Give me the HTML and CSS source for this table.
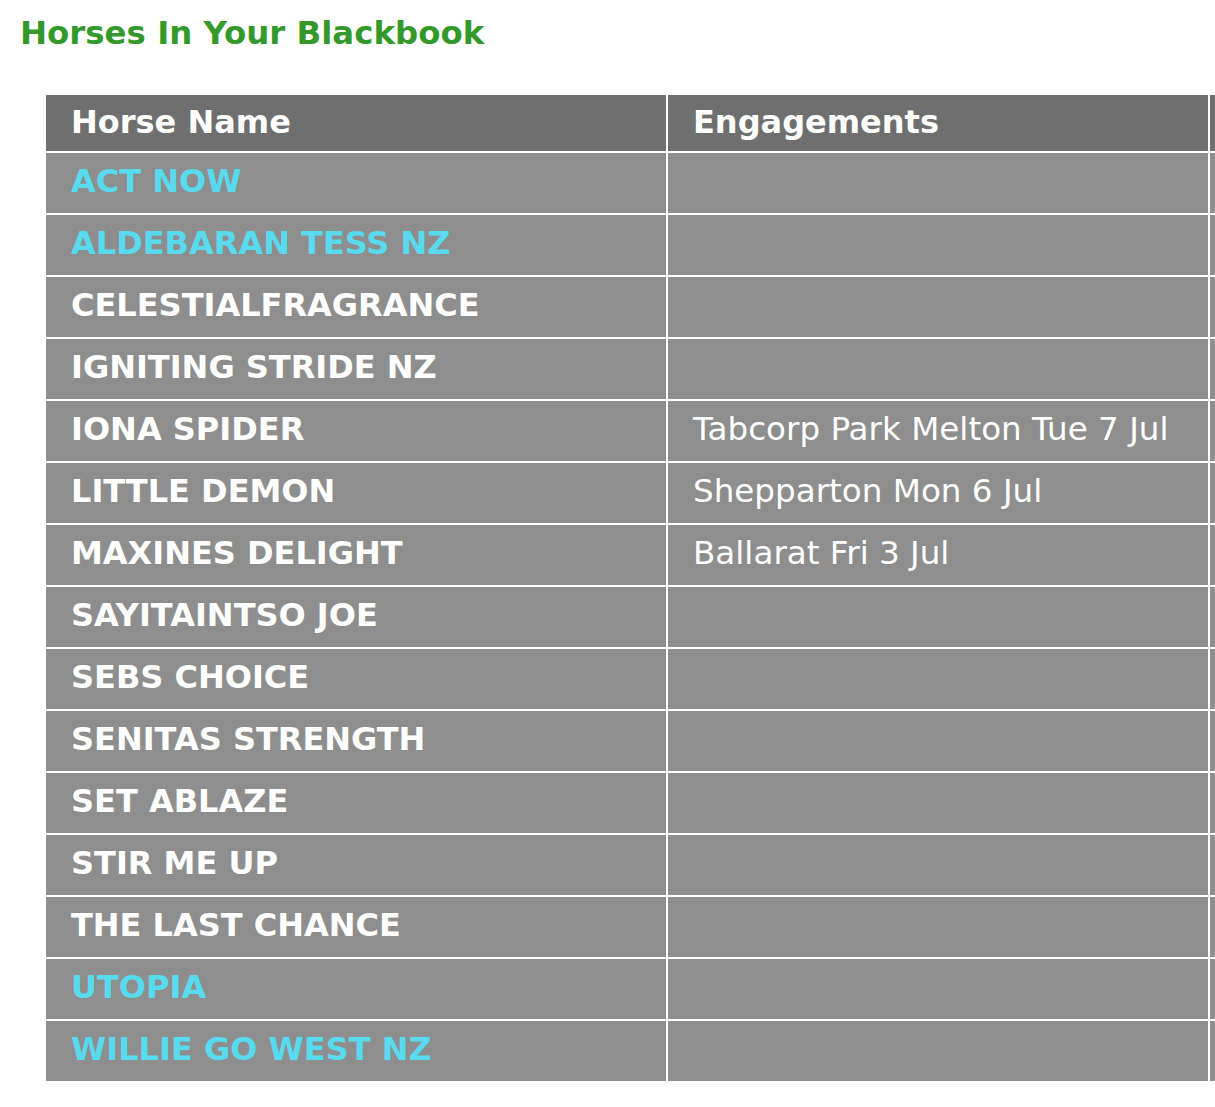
FILE: index.html
```
<!DOCTYPE html>
<html lang="en">
<head>
    <meta charset="UTF-8">
    <meta name="viewport" content="width=device-width, initial-scale=1.0">
    <title>Blackbook</title>
    <link rel="stylesheet" href="styles.css">
</head>
<body>
    <h1 class="page-title">Horses In Your Blackbook</h1>

    <div class="table-wrap">
        <table class="blackbook">
            <thead>
                <tr>
                    <th class="col-name">Horse Name</th>
                    <th class="col-eng">Engagements</th>
                    <th class="col-extra"></th>
                </tr>
            </thead>
            <tbody>
                <tr><td class="horse linked">ACT NOW</td><td></td><td></td></tr>
                <tr><td class="horse linked">ALDEBARAN TESS NZ</td><td></td><td></td></tr>
                <tr><td class="horse">CELESTIALFRAGRANCE</td><td></td><td></td></tr>
                <tr><td class="horse">IGNITING STRIDE NZ</td><td></td><td></td></tr>
                <tr><td class="horse">IONA SPIDER</td><td class="eng">Tabcorp Park Melton Tue 7 Jul</td><td></td></tr>
                <tr><td class="horse">LITTLE DEMON</td><td class="eng">Shepparton Mon 6 Jul</td><td></td></tr>
                <tr><td class="horse">MAXINES DELIGHT</td><td class="eng">Ballarat Fri 3 Jul</td><td></td></tr>
                <tr><td class="horse">SAYITAINTSO JOE</td><td></td><td></td></tr>
                <tr><td class="horse">SEBS CHOICE</td><td></td><td></td></tr>
                <tr><td class="horse">SENITAS STRENGTH</td><td></td><td></td></tr>
                <tr><td class="horse">SET ABLAZE</td><td></td><td></td></tr>
                <tr><td class="horse">STIR ME UP</td><td></td><td></td></tr>
                <tr><td class="horse">THE LAST CHANCE</td><td></td><td></td></tr>
                <tr><td class="horse linked">UTOPIA</td><td></td><td></td></tr>
                <tr><td class="horse linked">WILLIE GO WEST NZ</td><td></td><td></td></tr>
            </tbody>
        </table>
    </div>
</body>
</html>
```

FILE: styles.css
```
* {
    margin: 0;
    padding: 0;
    box-sizing: border-box;
}

body {
    font-family: Verdana, 'DejaVu Sans', sans-serif;
    background: white;
    overflow: hidden;
}

.page-title {
    color: #33992a;
    font-size: 32.4px;
    font-weight: bold;
    line-height: 38px;
    padding: 14px 0 0 20px;
    height: 95px;
}

.table-wrap {
    padding-left: 46px;
    overflow: hidden;
}

.blackbook {
    border-collapse: collapse;
    table-layout: fixed;
    width: 1300px;
}

.blackbook th,
.blackbook td {
    background: #8e8e8e;
    border-right: 2px solid white;
    border-bottom: 2px solid white;
    text-align: left;
    padding: 0 0 4px 25px;
    height: 62px;
    color: white;
}

.blackbook th {
    background: #6f6f6f;
    height: 57px;
    font-size: 32px;
    font-weight: bold;
    padding-bottom: 2px;
}

.col-name {
    width: 621px;
}

.col-eng {
    width: 542px;
}

.horse {
    font-size: 32px;
    font-weight: bold;
}

.horse.linked {
    color: #58dbee;
}

.eng {
    font-size: 32.6px;
}
```
